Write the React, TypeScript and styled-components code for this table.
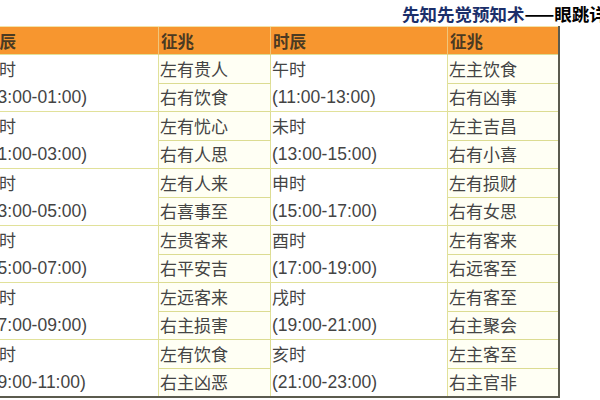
import React from 'react';
import styled, { createGlobalStyle } from 'styled-components';

type Row = {
  name: string;
  range: string;
  left: string;
  right: string;
};

const rows: Array<[Row, Row]> = [
  [
    { name: '子时', range: '(23:00-01:00)', left: '左有贵人', right: '右有饮食' },
    { name: '午时', range: '(11:00-13:00)', left: '左主饮食', right: '右有凶事' },
  ],
  [
    { name: '丑时', range: '(01:00-03:00)', left: '左有忧心', right: '右有人思' },
    { name: '未时', range: '(13:00-15:00)', left: '左主吉昌', right: '右有小喜' },
  ],
  [
    { name: '寅时', range: '(03:00-05:00)', left: '左有人来', right: '右喜事至' },
    { name: '申时', range: '(15:00-17:00)', left: '左有损财', right: '右有女思' },
  ],
  [
    { name: '卯时', range: '(05:00-07:00)', left: '左贵客来', right: '右平安吉' },
    { name: '酉时', range: '(17:00-19:00)', left: '左有客来', right: '右远客至' },
  ],
  [
    { name: '辰时', range: '(07:00-09:00)', left: '左远客来', right: '右主损害' },
    { name: '戌时', range: '(19:00-21:00)', left: '左有客至', right: '右主聚会' },
  ],
  [
    { name: '巳时', range: '(09:00-11:00)', left: '左有饮食', right: '右主凶恶' },
    { name: '亥时', range: '(21:00-23:00)', left: '左主客至', right: '右主官非' },
  ],
];

const GlobalStyle = createGlobalStyle`
  html, body {
    margin: 0;
    padding: 0;
    background: #fff;
  }
  body {
    width: 600px;
    height: 400px;
    overflow: hidden;
    font-family: "Liberation Sans", "Noto Sans CJK SC", sans-serif;
  }
`;

const Page = styled.div`
  width: 600px;
  height: 400px;
  overflow: hidden;
`;

const Title = styled.div`
  height: 26px;
  padding: 4px 0 0 402px;
  box-sizing: border-box;
  white-space: nowrap;
  font-family: "Noto Sans CJK SC", sans-serif;
  font-size: 17.5px;
  line-height: 19px;
  font-weight: 700;
  color: #000;
`;

const TitleMain = styled.span`
  color: #1b2f6a;
`;

const Table = styled.table`
  margin-left: -20px;
  border-collapse: collapse;
  table-layout: fixed;
  width: 578px;
  border-right: 2px solid #5b5b4e;
  border-bottom: 2px solid #5b5b4e;
  font-size: 17.5px;
  color: #444;
`;

const HeadCell = styled.th<{ $w: number }>`
  width: ${(p) => p.$w}px;
  height: 28px;
  padding: 0 0 0 2px;
  box-sizing: border-box;
  background: #f7962f;
  border-top: 1px solid #f3e3a8;
  border-left: 1px solid #f0c67a;
  text-align: left;
  font-family: "Noto Sans CJK SC", sans-serif;
  font-size: 16.5px;
  font-weight: 700;
  color: #4b3a22;
`;

const TimeCell = styled.td`
  padding: 0 0 0 1px;
  background: #fff;
  border: 1px solid #e1e19a;
  vertical-align: top;
  line-height: 28px;
  white-space: nowrap;
`;

const SignCell = styled.td`
  height: 28px;
  padding: 0 0 0 1px;
  box-sizing: border-box;
  background: #fffff4;
  border: 1px solid #dcdc92;
  line-height: 26px;
  font-family: "Noto Sans CJK SC", sans-serif;
  font-size: 17px;
  white-space: nowrap;
`;

const TimeName = styled.div`
  font-family: "Noto Sans CJK SC", sans-serif;
  font-size: 17px;
`;

function TimeBlock({ row }: { row: Row }) {
  return (
    <TimeCell rowSpan={2}>
      <TimeName>{row.name}</TimeName>
      <div>{row.range}</div>
    </TimeCell>
  );
}

export default function App() {
  return (
    <Page>
      <GlobalStyle />
      <Title>
        <TitleMain>先知先觉预知术</TitleMain>——眼跳详解
      </Title>
      <Table>
        <thead>
          <tr>
            <HeadCell $w={178}>时辰</HeadCell>
            <HeadCell $w={112}>征兆</HeadCell>
            <HeadCell $w={177}>时辰</HeadCell>
            <HeadCell $w={111}>征兆</HeadCell>
          </tr>
        </thead>
        <tbody>
          {rows.map(([a, b]) => (
            <React.Fragment key={a.name}>
              <tr>
                <TimeBlock row={a} />
                <SignCell>{a.left}</SignCell>
                <TimeBlock row={b} />
                <SignCell>{b.left}</SignCell>
              </tr>
              <tr>
                <SignCell>{a.right}</SignCell>
                <SignCell>{b.right}</SignCell>
              </tr>
            </React.Fragment>
          ))}
        </tbody>
      </Table>
    </Page>
  );
}
